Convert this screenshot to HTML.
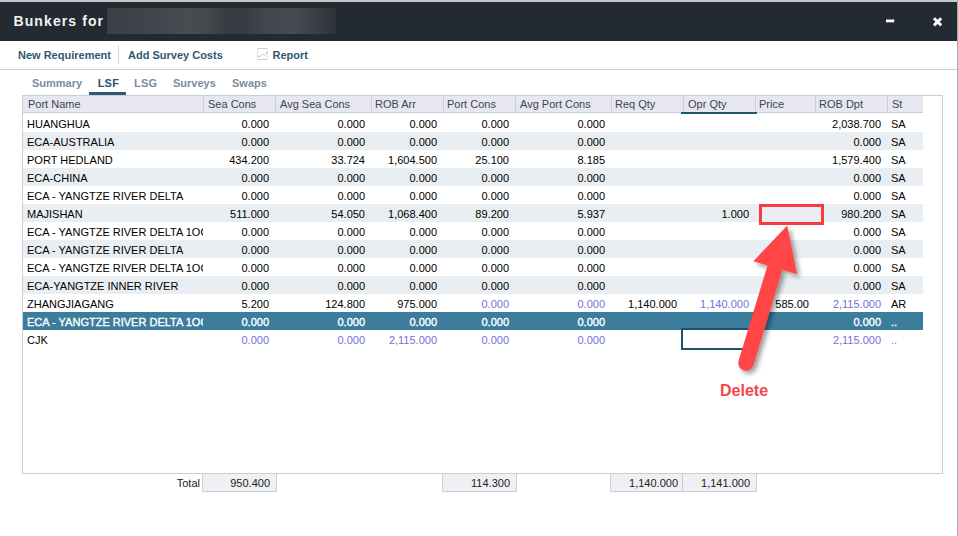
<!DOCTYPE html>
<html><head><meta charset="utf-8">
<style>
*{margin:0;padding:0;box-sizing:border-box}
html,body{width:958px;height:536px;overflow:hidden;background:#fff;font-family:"Liberation Sans",sans-serif}
.a{position:absolute;white-space:nowrap}
#topstrip{left:0;top:0;width:958px;height:2px;background:#c9c9c9}
#title{left:0;top:2px;width:957px;height:39px;background:#232a31}
#rightedge{left:957px;top:0;width:1px;height:536px;background:#a9a9a9}
#ttl{left:13.5px;top:13px;font-size:14px;font-weight:bold;letter-spacing:1.1px;color:#f2f2f2;line-height:16px}
#blur{left:107px;top:8px;width:229px;height:26px;background:linear-gradient(90deg,#3a4046 0%,#3e444a 15%,#464c50 35%,#44494d 44%,#363c41 52%,#373d43 61%,#42484e 70%,#464b51 82%,#383e44 92%,#2c3339 100%)}
.tb{font-size:11px;font-weight:bold;color:#2f5873;line-height:13px;top:49px}
#tbline{left:0;top:69px;width:957px;height:1px;background:#c9ced5}
#tbsep{left:118px;top:45px;width:1px;height:19px;background:#d3d7de}
.tab{font-size:11px;font-weight:bold;color:#7b8c9e;line-height:13px;top:77px}
#tabline{left:89px;top:92px;width:37px;height:3px;background:#2d5c76}
#tbl{left:22px;top:95px;width:921px;height:379px;border:1px solid #c8ced8;background:#fff}
.hdr{left:23px;top:96px;width:900px;height:17px;background:#e6e7f0;border-bottom:1px solid #c9cfd8}
.hc{top:96px;height:16px;font-size:11px;color:#3b4652;line-height:16px}
.vs{top:96px;width:1px;height:16px;background:#c9cfd8}
.row{left:23px;width:900px;height:18px}
.alt{background:#e8eef1}
.sel{background:#3c7d9e}
.c{font-size:11px;line-height:13px;color:#000}
.r{text-align:right}
.p{color:#7571d8}
.w{color:#fff;-webkit-text-stroke:0.35px #fff}
.tot{top:473px;height:19px;border:1px solid #c9ced6;background:#eff0f3}
</style></head><body>
<div class="a" id="topstrip"></div>
<div class="a" id="title"></div>
<div class="a" id="rightedge"></div>
<div class="a" id="ttl">Bunkers for</div>
<div class="a" id="blur"></div>
<!-- window buttons -->
<svg class="a" style="left:880px;top:10px" width="70" height="22" viewBox="0 0 70 22"><rect x="6" y="9.5" width="8.2" height="2.8" fill="#fff"/><path d="M54 8.2 L61.2 15.4 M61.2 8.2 L54 15.4" stroke="#fff" stroke-width="2.9"/></svg>


<div class="a tb" style="left:18px">New Requirement</div>
<div class="a" id="tbsep"></div>
<div class="a tb" style="left:128px">Add Survey Costs</div>
<svg class="a" style="left:257px;top:48px" width="11" height="12" viewBox="0 0 11 12"><rect x="0" y="0" width="11" height="1" fill="#cdcdd8"/><rect x="0" y="11" width="11" height="1" fill="#cdcdd8"/><rect x="0" y="0" width="1" height="12" fill="#e4e0f2"/><rect x="10" y="0" width="1" height="12" fill="#f0dde4"/><path d="M0.5 9.4 L1.4 8.4 L3.2 8.6 L4.4 7.2 L5.6 6.2 L7.4 7.4 L8.6 6.2 L10.4 3.4" fill="none" stroke="#d2bcd8" stroke-width="1"/></svg>
<div class="a tb" style="left:272.5px">Report</div>
<div class="a" id="tbline"></div>

<div class="a tab" style="left:32px">Summary</div>
<div class="a tab" style="left:97.7px;color:#2a5470;letter-spacing:0.2px">LSF</div>
<div class="a tab" style="left:134px;letter-spacing:0.2px">LSG</div>
<div class="a tab" style="left:173px">Surveys</div>
<div class="a tab" style="left:232px">Swaps</div>
<div class="a" id="tabline"></div>

<div class="a" id="tbl"></div>
<div class="a hdr"></div>
<div class="a" style="left:681px;top:112px;width:76px;height:2px;background:#1f5671"></div>
<div class="a hc" style="left:28px">Port Name</div>
<div class="a vs" style="left:203px"></div>
<div class="a hc" style="left:208px">Sea Cons</div>
<div class="a vs" style="left:275px"></div>
<div class="a hc" style="left:280px">Avg Sea Cons</div>
<div class="a vs" style="left:371px"></div>
<div class="a hc" style="left:375px">ROB Arr</div>
<div class="a vs" style="left:443px"></div>
<div class="a hc" style="left:447px">Port Cons</div>
<div class="a vs" style="left:515px"></div>
<div class="a hc" style="left:520px">Avg Port Cons</div>
<div class="a vs" style="left:611px"></div>
<div class="a hc" style="left:615px">Req Qty</div>
<div class="a vs" style="left:683px"></div>
<div class="a hc" style="left:688px">Opr Qty</div>
<div class="a vs" style="left:755px"></div>
<div class="a hc" style="left:759px">Price</div>
<div class="a vs" style="left:815px"></div>
<div class="a hc" style="left:819px">ROB Dpt</div>
<div class="a vs" style="left:887px"></div>
<div class="a hc" style="left:892px">St</div>

<div id="rows">
<div class="a row" style="top:114px"></div>
<div class="a c" style="left:27px;top:118px;width:176px;overflow:hidden">HUANGHUA</div>
<div class="a c r" style="left:204px;top:118px;width:65px">0.000</div>
<div class="a c r" style="left:276px;top:118px;width:89px">0.000</div>
<div class="a c r" style="left:372px;top:118px;width:65px">0.000</div>
<div class="a c r" style="left:444px;top:118px;width:65px">0.000</div>
<div class="a c r" style="left:516px;top:118px;width:89px">0.000</div>
<div class="a c r" style="left:816px;top:118px;width:65px">2,038.700</div>
<div class="a c" style="left:891px;top:118px">SA</div>
<div class="a row alt" style="top:132px"></div>
<div class="a c" style="left:27px;top:136px;width:176px;overflow:hidden">ECA-AUSTRALIA</div>
<div class="a c r" style="left:204px;top:136px;width:65px">0.000</div>
<div class="a c r" style="left:276px;top:136px;width:89px">0.000</div>
<div class="a c r" style="left:372px;top:136px;width:65px">0.000</div>
<div class="a c r" style="left:444px;top:136px;width:65px">0.000</div>
<div class="a c r" style="left:516px;top:136px;width:89px">0.000</div>
<div class="a c r" style="left:816px;top:136px;width:65px">0.000</div>
<div class="a c" style="left:891px;top:136px">SA</div>
<div class="a row" style="top:150px"></div>
<div class="a c" style="left:27px;top:154px;width:176px;overflow:hidden">PORT HEDLAND</div>
<div class="a c r" style="left:204px;top:154px;width:65px">434.200</div>
<div class="a c r" style="left:276px;top:154px;width:89px">33.724</div>
<div class="a c r" style="left:372px;top:154px;width:65px">1,604.500</div>
<div class="a c r" style="left:444px;top:154px;width:65px">25.100</div>
<div class="a c r" style="left:516px;top:154px;width:89px">8.185</div>
<div class="a c r" style="left:816px;top:154px;width:65px">1,579.400</div>
<div class="a c" style="left:891px;top:154px">SA</div>
<div class="a row alt" style="top:168px"></div>
<div class="a c" style="left:27px;top:172px;width:176px;overflow:hidden">ECA-CHINA</div>
<div class="a c r" style="left:204px;top:172px;width:65px">0.000</div>
<div class="a c r" style="left:276px;top:172px;width:89px">0.000</div>
<div class="a c r" style="left:372px;top:172px;width:65px">0.000</div>
<div class="a c r" style="left:444px;top:172px;width:65px">0.000</div>
<div class="a c r" style="left:516px;top:172px;width:89px">0.000</div>
<div class="a c r" style="left:816px;top:172px;width:65px">0.000</div>
<div class="a c" style="left:891px;top:172px">SA</div>
<div class="a row" style="top:186px"></div>
<div class="a c" style="left:27px;top:190px;width:176px;overflow:hidden">ECA - YANGTZE RIVER DELTA</div>
<div class="a c r" style="left:204px;top:190px;width:65px">0.000</div>
<div class="a c r" style="left:276px;top:190px;width:89px">0.000</div>
<div class="a c r" style="left:372px;top:190px;width:65px">0.000</div>
<div class="a c r" style="left:444px;top:190px;width:65px">0.000</div>
<div class="a c r" style="left:516px;top:190px;width:89px">0.000</div>
<div class="a c r" style="left:816px;top:190px;width:65px">0.000</div>
<div class="a c" style="left:891px;top:190px">SA</div>
<div class="a row alt" style="top:204px"></div>
<div class="a c" style="left:27px;top:208px;width:176px;overflow:hidden">MAJISHAN</div>
<div class="a c r" style="left:204px;top:208px;width:65px">511.000</div>
<div class="a c r" style="left:276px;top:208px;width:89px">54.050</div>
<div class="a c r" style="left:372px;top:208px;width:65px">1,068.400</div>
<div class="a c r" style="left:444px;top:208px;width:65px">89.200</div>
<div class="a c r" style="left:516px;top:208px;width:89px">5.937</div>
<div class="a c r" style="left:684px;top:208px;width:65px">1.000</div>
<div class="a c r" style="left:816px;top:208px;width:65px">980.200</div>
<div class="a c" style="left:891px;top:208px">SA</div>
<div class="a row" style="top:222px"></div>
<div class="a c" style="left:27px;top:226px;width:176px;overflow:hidden">ECA - YANGTZE RIVER DELTA 1OOO</div>
<div class="a c r" style="left:204px;top:226px;width:65px">0.000</div>
<div class="a c r" style="left:276px;top:226px;width:89px">0.000</div>
<div class="a c r" style="left:372px;top:226px;width:65px">0.000</div>
<div class="a c r" style="left:444px;top:226px;width:65px">0.000</div>
<div class="a c r" style="left:516px;top:226px;width:89px">0.000</div>
<div class="a c r" style="left:816px;top:226px;width:65px">0.000</div>
<div class="a c" style="left:891px;top:226px">SA</div>
<div class="a row alt" style="top:240px"></div>
<div class="a c" style="left:27px;top:244px;width:176px;overflow:hidden">ECA - YANGTZE RIVER DELTA</div>
<div class="a c r" style="left:204px;top:244px;width:65px">0.000</div>
<div class="a c r" style="left:276px;top:244px;width:89px">0.000</div>
<div class="a c r" style="left:372px;top:244px;width:65px">0.000</div>
<div class="a c r" style="left:444px;top:244px;width:65px">0.000</div>
<div class="a c r" style="left:516px;top:244px;width:89px">0.000</div>
<div class="a c r" style="left:816px;top:244px;width:65px">0.000</div>
<div class="a c" style="left:891px;top:244px">SA</div>
<div class="a row" style="top:258px"></div>
<div class="a c" style="left:27px;top:262px;width:176px;overflow:hidden">ECA - YANGTZE RIVER DELTA 1OOO</div>
<div class="a c r" style="left:204px;top:262px;width:65px">0.000</div>
<div class="a c r" style="left:276px;top:262px;width:89px">0.000</div>
<div class="a c r" style="left:372px;top:262px;width:65px">0.000</div>
<div class="a c r" style="left:444px;top:262px;width:65px">0.000</div>
<div class="a c r" style="left:516px;top:262px;width:89px">0.000</div>
<div class="a c r" style="left:816px;top:262px;width:65px">0.000</div>
<div class="a c" style="left:891px;top:262px">SA</div>
<div class="a row alt" style="top:276px"></div>
<div class="a c" style="left:27px;top:280px;width:176px;overflow:hidden">ECA-YANGTZE INNER RIVER</div>
<div class="a c r" style="left:204px;top:280px;width:65px">0.000</div>
<div class="a c r" style="left:276px;top:280px;width:89px">0.000</div>
<div class="a c r" style="left:372px;top:280px;width:65px">0.000</div>
<div class="a c r" style="left:444px;top:280px;width:65px">0.000</div>
<div class="a c r" style="left:516px;top:280px;width:89px">0.000</div>
<div class="a c r" style="left:816px;top:280px;width:65px">0.000</div>
<div class="a c" style="left:891px;top:280px">SA</div>
<div class="a row" style="top:294px"></div>
<div class="a c" style="left:27px;top:298px;width:176px;overflow:hidden">ZHANGJIAGANG</div>
<div class="a c r" style="left:204px;top:298px;width:65px">5.200</div>
<div class="a c r" style="left:276px;top:298px;width:89px">124.800</div>
<div class="a c r" style="left:372px;top:298px;width:65px">975.000</div>
<div class="a c r p" style="left:444px;top:298px;width:65px">0.000</div>
<div class="a c r p" style="left:516px;top:298px;width:89px">0.000</div>
<div class="a c r" style="left:612px;top:298px;width:65px">1,140.000</div>
<div class="a c r p" style="left:684px;top:298px;width:65px">1,140.000</div>
<div class="a c r" style="left:756px;top:298px;width:53px">585.00</div>
<div class="a c r p" style="left:816px;top:298px;width:65px">2,115.000</div>
<div class="a c" style="left:891px;top:298px">AR</div>
<div class="a row sel" style="top:312px"></div>
<div class="a c w" style="left:27px;top:316px;width:176px;overflow:hidden">ECA - YANGTZE RIVER DELTA 1OOO</div>
<div class="a c r w" style="left:204px;top:316px;width:65px">0.000</div>
<div class="a c r w" style="left:276px;top:316px;width:89px">0.000</div>
<div class="a c r w" style="left:372px;top:316px;width:65px">0.000</div>
<div class="a c r w" style="left:444px;top:316px;width:65px">0.000</div>
<div class="a c r w" style="left:516px;top:316px;width:89px">0.000</div>
<div class="a c r w" style="left:816px;top:316px;width:65px">0.000</div>
<div class="a c w" style="left:891px;top:316px">..</div>
<div class="a row" style="top:330px"></div>
<div class="a c" style="left:27px;top:334px;width:176px;overflow:hidden">CJK</div>
<div class="a c r p" style="left:204px;top:334px;width:65px">0.000</div>
<div class="a c r p" style="left:276px;top:334px;width:89px">0.000</div>
<div class="a c r p" style="left:372px;top:334px;width:65px">2,115.000</div>
<div class="a c r p" style="left:444px;top:334px;width:65px">0.000</div>
<div class="a c r p" style="left:516px;top:334px;width:89px">0.000</div>
<div class="a c r p" style="left:816px;top:334px;width:65px">2,115.000</div>
<div class="a c p" style="left:891px;top:334px">..</div>
</div>

<div class="a c" style="left:150px;top:477px;width:50px;text-align:right;color:#222">Total</div>
<div class="a tot" style="left:202px;width:75px"></div>
<div class="a c r" style="left:202px;top:477px;width:68px;color:#222">950.400</div>
<div class="a tot" style="left:442px;width:75px"></div>
<div class="a c r" style="left:442px;top:477px;width:68px;color:#222">114.300</div>
<div class="a tot" style="left:610px;width:73px"></div>
<div class="a c r" style="left:610px;top:477px;width:68px;color:#222">1,140.000</div>
<div class="a tot" style="left:682px;width:75px"></div>
<div class="a c r" style="left:683px;top:477px;width:67px;color:#222">1,141.000</div>


<div class="a" style="left:681px;top:328px;width:77px;height:22px;border:2px solid #1d5370"></div>
<div class="a" style="left:759px;top:204px;width:65px;height:21px;border:3px solid #fb3a40"></div>
<svg class="a" style="left:0;top:0" width="958" height="536" viewBox="0 0 958 536">
<defs><filter id="sh" x="-50%" y="-50%" width="200%" height="200%"><feGaussianBlur in="SourceAlpha" stdDeviation="2.5"/><feOffset dx="2.5" dy="2.5" result="o"/><feComponentTransfer><feFuncA type="linear" slope="0.4"/></feComponentTransfer><feMerge><feMergeNode/><feMergeNode in="SourceGraphic"/></feMerge></filter></defs>
<g filter="url(#sh)">
<line x1="746" y1="363" x2="775" y2="267.5" stroke="#ff4545" stroke-width="15.5" stroke-linecap="round"/>
<path d="M787.2 225.4 L753.4 261.2 L797 274.3 Z" fill="#ff4545"/>
</g>
</svg>
<div class="a" style="left:720px;top:383px;font-size:16px;font-weight:bold;color:#f5454b;line-height:16px">Delete</div>
</body></html>
